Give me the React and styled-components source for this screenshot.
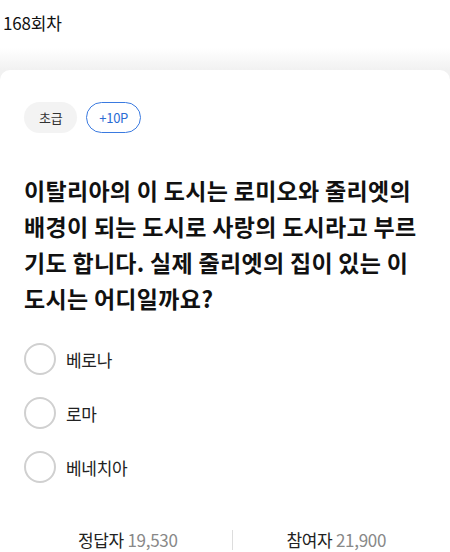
import styled, { createGlobalStyle } from "styled-components"

const GlobalStyle = createGlobalStyle`
  html, body {
    margin: 0;
    padding: 0;
    background: #fff;
  }
  body {
    font-family: "Noto Sans CJK KR", "Noto Sans", sans-serif;
    color: #222;
  }
`

const quiz = {
  round: "168회차",
  level: "초급",
  point: "+10P",
  question: "이탈리아의 이 도시는 로미오와 줄리엣의 배경이 되는 도시로 사랑의 도시라고 부르기도 합니다. 실제 줄리엣의 집이 있는 이 도시는 어디일까요?",
  options: ["베로나", "로마", "베네치아"],
  correct: "19,530",
  joined: "21,900",
}

const App = () => {
  return (<>
    <GlobalStyle />
    <Page>
      <Header>{quiz.round}</Header>
      <Card>
        <Chips>
          <Chip>{quiz.level}</Chip>
          <Chip $outline>{quiz.point}</Chip>
        </Chips>
        <Question>{quiz.question}</Question>
        <Options>
          {quiz.options.map((opt) => (
            <Option key={opt}>
              <Radio />
              <Label>{opt}</Label>
            </Option>
          ))}
        </Options>
        <Stats>
          <Stat>정답자 <Num>{quiz.correct}</Num></Stat>
          <Divider />
          <Stat>참여자 <Num>{quiz.joined}</Num></Stat>
        </Stats>
      </Card>
    </Page>
  </>)
}

const Page = styled.div`
  width: 450px;
  height: 552px;
  overflow: hidden;
  background: linear-gradient(to bottom, #fff 0, #fff 48px, #f1f1f1 70px, #f1f1f1 100%);
  display: flex;
  flex-direction: column;
`
const Header = styled.div`
  height: 48px;
  display: flex;
  align-items: center;
  padding-left: 3px;
  padding-bottom: 4px;
  box-sizing: border-box;
  font-size: 17px;
  letter-spacing: -0.2px;
  color: #111;
`
const Card = styled.div`
  margin-top: 22px;
  flex: 1;
  background: #fff;
  border-radius: 10px 10px 0 0;
  padding: 32px 10px 0 24px;
  display: flex;
  flex-direction: column;
`
const Chips = styled.div`
  display: flex;
  gap: 9px;
`
const Chip = styled.span`
  height: 31px;
  box-sizing: border-box;
  display: inline-flex;
  align-items: center;
  padding: ${(p) => (p.$outline ? "0 12px" : "0 15px")};
  border-radius: 16px;
  font-size: 13px;
  letter-spacing: -0.3px;
  background: ${(p) => (p.$outline ? "#fff" : "#f3f3f3")};
  color: ${(p) => (p.$outline ? "#2a6cd4" : "#333")};
  border: ${(p) => (p.$outline ? "1px solid #3a7ae0" : "none")};
`
const Question = styled.p`
  margin: 39px 0 0;
  padding-right: 15px;
  font-size: 23px;
  font-weight: 700;
  line-height: 36px;
  letter-spacing: 0.3px;
  color: #111;
`
const Options = styled.div`
  margin-top: 27px;
  display: flex;
  flex-direction: column;
  gap: 22px;
`
const Option = styled.div`
  display: flex;
  align-items: center;
  gap: 10px;
`
const Radio = styled.span`
  width: 32px;
  height: 32px;
  box-sizing: border-box;
  border-radius: 50%;
  border: 2px solid #d0d0d0;
`
const Label = styled.span`
  font-size: 17px;
  letter-spacing: -0.3px;
  color: #222;
`
const Stats = styled.div`
  margin-top: 44px;
  display: flex;
  align-items: center;
`
const Stat = styled.div`
  flex: 1;
  text-align: center;
  font-size: 17px;
  letter-spacing: -0.3px;
  color: #222;
`
const Num = styled.span`
  color: #888;
`
const Divider = styled.span`
  width: 1px;
  height: 20px;
  background: #ddd;
`

export default App
